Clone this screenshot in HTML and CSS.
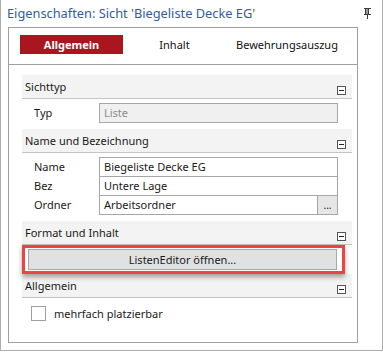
FILE: index.html
```html
<!DOCTYPE html>
<html lang="de">
<head>
<meta charset="utf-8">
<title>Eigenschaften</title>
<link rel="stylesheet" href="styles.css">
</head>
<body>
<div class="window">
  <div class="titlebar">
    <span class="title">Eigenschaften: Sicht 'Biegeliste Decke EG'</span>
    <svg class="pin" width="9" height="11" viewBox="0 0 9 11">
      <rect x="1" y="0" width="7" height="1" fill="#3c3c3c"/>
      <rect x="2" y="1" width="1" height="5" fill="#3c3c3c"/>
      <rect x="5" y="1" width="1" height="5" fill="#3c3c3c"/>
      <rect x="3" y="1" width="2" height="5" fill="#9a9a9a"/>
      <rect x="1" y="6" width="7" height="1" fill="#3c3c3c"/>
      <rect x="4" y="7" width="1" height="4" fill="#3c3c3c"/>
    </svg>
  </div>
  <div class="panel">
    <div class="tabs">
      <div class="tab active">Allgemein</div>
      <div class="tab">Inhalt</div>
      <div class="tab">Bewehrungsauszug</div>
    </div>
    <div class="content">
      <div class="group-head"><span>Sichttyp</span><span class="minus"></span></div>
      <div class="rows">
        <div class="row"><span class="label">Typ</span><span class="field disabled">Liste</span></div>
      </div>
      <div class="group-head"><span>Name und Bezeichnung</span><span class="minus"></span></div>
      <div class="rows">
        <div class="row"><span class="label">Name</span><span class="field">Biegeliste Decke EG</span></div>
        <div class="row"><span class="label">Bez</span><span class="field">Untere Lage</span></div>
        <div class="row"><span class="label">Ordner</span><span class="field with-btn"><span class="val">Arbeitsordner</span><span class="dots">...</span></span></div>
      </div>
      <div class="group-head"><span>Format und Inhalt</span><span class="minus"></span></div>
      <div class="highlight"><div class="button">ListenEditor öffnen...</div></div>
      <div class="group-head"><span>Allgemein</span><span class="minus"></span></div>
      <div class="check-row"><span class="checkbox"></span><span>mehrfach platzierbar</span></div>
    </div>
  </div>
</div>
</body>
</html>
```
FILE: styles.css
```css
* { box-sizing: border-box; }
html, body { margin: 0; padding: 0; background: #fff; }
body { font-family: "Noto Sans", "Open Sans", sans-serif; font-size: 11px; color: #1a1a1a; }

.window {
  width: 383px;
  height: 351px;
  border: 1px solid #acacac;
  border-top: none;
}

.titlebar {
  height: 27px;
  display: flex;
  align-items: center;
  justify-content: space-between;
  padding: 0 10px 2px 6px;
}
.title { color: #2f5d9e; font-size: 12.8px; }
.pin { display: block; margin-top: 1px; }

.panel {
  margin-left: 7px;
  width: 350px;
  height: 316px;
  border: 1px solid #a0a0a0;
}

.tabs {
  height: 37px;
  border-bottom: 1px solid #a0a0a0;
  display: flex;
  align-items: flex-start;
  padding: 7px 0 0 11px;
}
.tab {
  min-width: 103px;
  height: 19px;
  padding: 0 10px;
  display: flex;
  align-items: center;
  justify-content: center;
  color: #111;
}
.tab.active { background: #a9161f; color: #fff; font-weight: bold; }

.content { padding: 10px 5px 0 13px; }

.group-head {
  height: 24px;
  background: #f3f3f3;
  border-bottom: 1px solid #c4c4c4;
  display: flex;
  align-items: center;
  justify-content: space-between;
  padding: 0 6px 0 3px;
}
.minus {
  width: 9px;
  height: 9px;
  border: 1px solid #555;
  background: #fff;
  position: relative;
  margin-top: 8px;
}
.minus::after {
  content: "";
  position: absolute;
  left: 1px;
  right: 1px;
  top: 3px;
  height: 1px;
  background: #222;
}

.rows { padding: 4px 0 6px; }
.row { display: flex; height: 20px; }
.row + .row { margin-top: -1px; }
.label { width: 77px; padding-left: 12px; line-height: 19px; }
.field {
  width: 239px;
  height: 20px;
  border: 1px solid #a6a6a6;
  padding-left: 4px;
  line-height: 17px;
  background: #fff;
}
.field.disabled { background: #f0f0f0; color: #8c8c8c; }
.field.with-btn { display: flex; padding-left: 0; }
.val { flex: 1; padding-left: 4px; }
.dots {
  width: 20px;
  background: #e6e6e6;
  border-left: 1px solid #a6a6a6;
  text-align: center;
  font-size: 10px;
  line-height: 19px;
}

.highlight {
  width: 323px;
  border: 3px solid #ee4343;
  padding: 1px 5px 1px 3px;
  box-shadow: 0 3px 5px rgba(0,0,0,0.35);
  position: relative;
}
.button {
  height: 21px;
  background: #e1e1e1;
  border: 1px solid #a8a8a8;
  text-align: center;
  line-height: 19px;
}

.check-row { display: flex; align-items: center; padding: 8px 0 0 9px; }
.checkbox {
  width: 15px;
  height: 15px;
  border: 1px solid #a0a0a0;
  margin-right: 8px;
}
```
